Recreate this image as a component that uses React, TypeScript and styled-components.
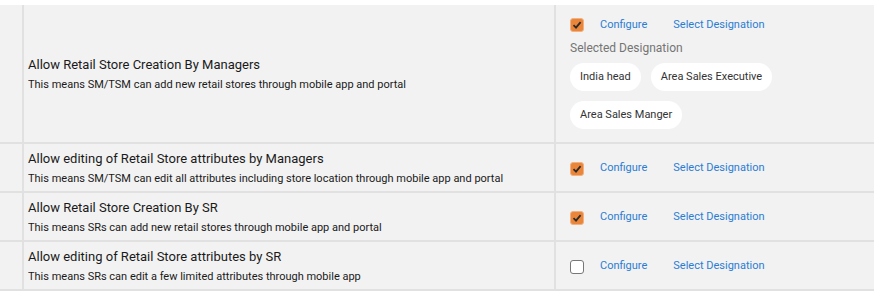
import React from "react"
import styled, { createGlobalStyle } from "styled-components"

const GlobalStyle = createGlobalStyle`
	body {
		margin: 0;
		background: #ffffff;
		font-family: Roboto, "Liberation Sans", sans-serif;
	}
`

const Table = styled.div`
	margin-top: 5px;
	background: #f2f2f2;
`

const Row = styled.div`
	display: grid;
	grid-template-columns: 24px 1fr 318px;
	border-bottom: 2px solid #e1e1e1;
`

const Gutter = styled.div`
	border-right: 2px solid #e1e1e1;
`

const Info = styled.div`
	display: flex;
	flex-direction: column;
	justify-content: center;
	padding: 0 4px;
	border-right: 2px solid #e1e1e1;
`

const Title = styled.div`
	font-size: 13px;
	line-height: 17px;
	color: #1a1a1a;
`

const Desc = styled.div`
	margin-top: 5px;
	font-size: 11px;
	line-height: 14px;
	color: #1a1a1a;
`

const Actions = styled.div<{ $expanded?: boolean }>`
	display: flex;
	flex-direction: column;
	justify-content: ${(p) => (p.$expanded ? "flex-start" : "center")};
	padding: ${(p) => (p.$expanded ? "11px 14px 13px" : "0 14px")};
	height: ${(p) => (p.$expanded ? "auto" : "47px")};
	box-sizing: border-box;
`

const ActionLine = styled.div`
	display: flex;
	align-items: center;
	height: 16px;
`

const Check = styled.span<{ $checked: boolean }>`
	width: 14px;
	height: 14px;
	box-sizing: border-box;
	border-radius: 3px;
	display: inline-flex;
	align-items: center;
	justify-content: center;
	background: ${(p) => (p.$checked ? "#eb8539" : "#ffffff")};
	border: 1px solid ${(p) => (p.$checked ? "#f0b283" : "#777777")};
	margin-right: 16px;
	margin-top: 2px;
`

const Link = styled.a`
	font-size: 11px;
	color: #2b7dd3;
	text-decoration: none;
	margin-right: 26px;
	cursor: pointer;
`

const Label = styled.div`
	margin-top: 8px;
	font-size: 12px;
	line-height: 16px;
	color: #757575;
`

const Chips = styled.div`
	display: flex;
	flex-wrap: wrap;
	gap: 10px;
	margin-top: 7px;
`

const Chip = styled.span`
	height: 28px;
	line-height: 28px;
	padding: 0 10px;
	border-radius: 14px;
	background: #ffffff;
	font-size: 11px;
	color: #333333;
`

const Tick = () => (
	<svg width="10" height="10" viewBox="0 0 10 10">
		<path
			d="M1.5 5.2 L4 7.6 L8.6 2.2"
			fill="none"
			stroke="#2b2b2b"
			strokeWidth="1.8"
		/>
	</svg>
)

const settings = [
	{
		title: "Allow Retail Store Creation By Managers",
		desc: "This means SM/TSM can add new retail stores through mobile app and portal",
		checked: true,
		designations: ["India head", "Area Sales Executive", "Area Sales Manger"],
	},
	{
		title: "Allow editing of Retail Store attributes by Managers",
		desc: "This means SM/TSM can edit all attributes including store location through mobile app and portal",
		checked: true,
	},
	{
		title: "Allow Retail Store Creation By SR",
		desc: "This means SRs can add new retail stores through mobile app and portal",
		checked: true,
	},
	{
		title: "Allow editing of Retail Store attributes by SR",
		desc: "This means SRs can edit a few limited attributes through mobile app",
		checked: false,
	},
]

const App = () => {
	return (
		<>
			<GlobalStyle />
			<Table>
				{settings.map((s) => (
					<Row key={s.title}>
						<Gutter />
						<Info>
							<Title>{s.title}</Title>
							<Desc>{s.desc}</Desc>
						</Info>
						<Actions $expanded={!!s.designations}>
							<ActionLine>
								<Check $checked={s.checked}>
									{s.checked && <Tick />}
								</Check>
								<Link>Configure</Link>
								<Link>Select Designation</Link>
							</ActionLine>
							{s.designations && (
								<>
									<Label>Selected Designation</Label>
									<Chips>
										{s.designations.map((d) => (
											<Chip key={d}>{d}</Chip>
										))}
									</Chips>
								</>
							)}
						</Actions>
					</Row>
				))}
			</Table>
		</>
	)
}

export default App
